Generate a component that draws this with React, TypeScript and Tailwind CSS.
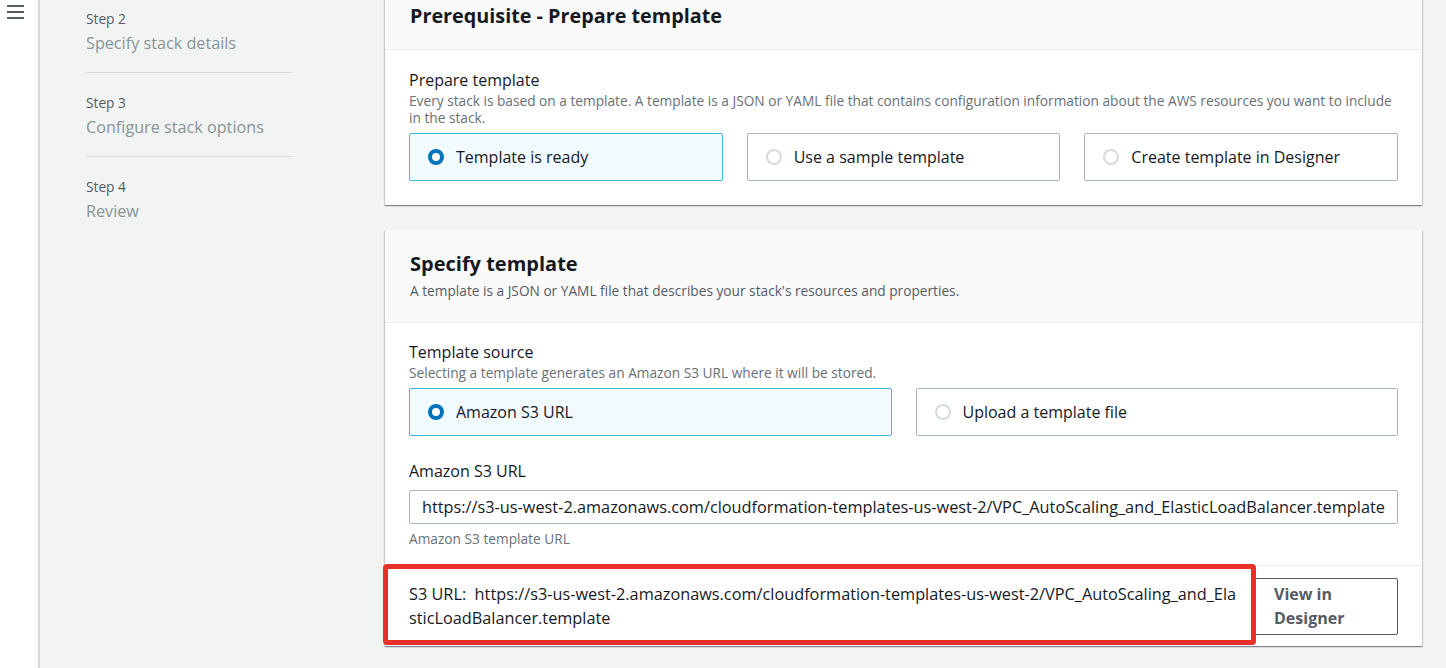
import React from "react";

const URL =
  "https://s3-us-west-2.amazonaws.com/cloudformation-templates-us-west-2/VPC_AutoScaling_and_ElasticLoadBalancer.template";

function Radio({ checked }: { checked?: boolean }) {
  return checked ? (
    <span className="w-[16px] h-[16px] rounded-full border-[4px] border-[#0073bb] bg-white shrink-0" />
  ) : (
    <span className="w-[16px] h-[16px] rounded-full border-[2px] border-[#d5dbdb] bg-white shrink-0" />
  );
}

function Tile({ label, checked }: { label: string; checked?: boolean }) {
  return (
    <div
      className={
        "flex-1 h-[48px] flex items-center gap-[12px] pl-[18px] rounded-[2px] border " +
        (checked ? "bg-[#f1faff] border-[#44b9d6]" : "bg-white border-[#aab7b8]")
      }
    >
      <Radio checked={checked} />
      <span className="text-[16px] text-[#16191f]">{label}</span>
    </div>
  );
}

function Step({ n, title, last }: { n: number; title: string; last?: boolean }) {
  return (
    <div className={"w-[206px] " + (last ? "" : "border-b border-[#d5dbdb] pb-[15px] mb-[20px]")}>
      <div className="text-[13.7px] leading-[20px] text-[#545b64]">{`Step ${n}`}</div>
      <div className="text-[16.2px] leading-[28px] text-[#879596]">{title}</div>
    </div>
  );
}

const panelShadow =
  "bg-white shadow-[0_1px_1px_0_rgba(0,28,36,0.3),1px_1px_1px_0_rgba(0,28,36,0.15),-1px_1px_1px_0_rgba(0,28,36,0.15)]";

export default function App() {
  return (
    <div
      className="flex h-[668px] w-[1446px] overflow-hidden bg-[#f2f3f3]"
      style={{ fontFamily: '"Open Sans", "Noto Sans", sans-serif' }}
    >
      <div className="w-[40px] shrink-0 bg-white border-r-[2px] border-[#d5dbdb] pt-[5px] pl-[7px]">
        <div className="flex flex-col gap-[4px] w-[17px]">
          <span className="h-[2px] bg-[#545b64]" />
          <span className="h-[2px] bg-[#545b64]" />
          <span className="h-[2px] bg-[#545b64]" />
        </div>
      </div>

      <div className="w-[345px] shrink-0 pl-[46px] pt-[9px]">
        <Step n={2} title="Specify stack details" />
        <Step n={3} title="Configure stack options" />
        <Step n={4} title="Review" last />
      </div>

      <div className="w-[1037px] shrink-0 flex flex-col gap-[25px] -mt-[8px]">
        <div className={panelShadow}>
          <div className="bg-[#fafafa] border-b border-[#eaeded] h-[58px] pt-[10px] pl-[25px]">
            <h2 className="text-[19.8px] leading-[28px] font-bold text-[#16191f]">
              Prerequisite - Prepare template
            </h2>
          </div>
          <div className="px-[24px] pt-[19px] pb-[24px]">
            <div className="text-[16px] leading-[22px] text-[#16191f]">Prepare template</div>
            <div className="mt-[1px] text-[13.7px] leading-[17px] text-[#687078]">
              Every stack is based on a template. A template is a JSON or YAML file that contains configuration
              information about the AWS resources you want to include in the stack.
            </div>
            <div className="flex gap-[24px] mt-[7px]">
              <Tile label="Template is ready" checked />
              <Tile label="Use a sample template" />
              <Tile label="Create template in Designer" />
            </div>
          </div>
        </div>

        <div className={panelShadow}>
          <div className="bg-[#fafafa] border-b border-[#eaeded] pt-[20px] pb-[21px] pl-[25px]">
            <h2 className="text-[20px] leading-[28px] font-bold text-[#16191f]">Specify template</h2>
            <div className="mt-[3px] text-[13.7px] leading-[20px] text-[#545b64]">
              A template is a JSON or YAML file that describes your stack's resources and properties.
            </div>
          </div>
          <div className="px-[24px] pt-[18px] pb-[16px] border-b border-[#eaeded]">
            <div className="text-[16px] leading-[22px] text-[#16191f]">Template source</div>
            <div className="text-[13.7px] leading-[20px] text-[#687078]">
              Selecting a template generates an Amazon S3 URL where it will be stored.
            </div>
            <div className="flex gap-[24px] mt-[5px]">
              <Tile label="Amazon S3 URL" checked />
              <Tile label="Upload a template file" />
            </div>
            <div className="text-[16px] leading-[22px] text-[#16191f] mt-[24px]">Amazon S3 URL</div>
            <div className="mt-[8px] h-[34px] border border-[#aab7b8] rounded-[2px] flex items-center pl-[12px] text-[16.3px] text-[#16191f] whitespace-nowrap overflow-hidden">
              {URL}
            </div>
            <div className="text-[13.7px] leading-[20px] text-[#687078] mt-[5px]">Amazon S3 template URL</div>
          </div>
          <div className="relative flex items-center justify-between pl-[24px] pr-[24px] h-[80px]">
            <div className="w-[834px] text-[16.3px] leading-[24px] text-[#16191f] break-all">
              {`S3 URL:\u00a0 ${URL}`}
            </div>
            <div className="w-[147px] h-[57px] border border-[#545b64] rounded-[2px] flex flex-col justify-center pl-[22px] text-[16px] leading-[24px] font-bold text-[#545b64]">
              <span>View in</span>
              <span>Designer</span>
            </div>
            <div className="absolute -top-[2px] -left-[2px] w-[873px] h-[81px] border-[5px] border-[#e8302a] rounded-[4px] pointer-events-none" />
          </div>
        </div>
      </div>
    </div>
  );
}
